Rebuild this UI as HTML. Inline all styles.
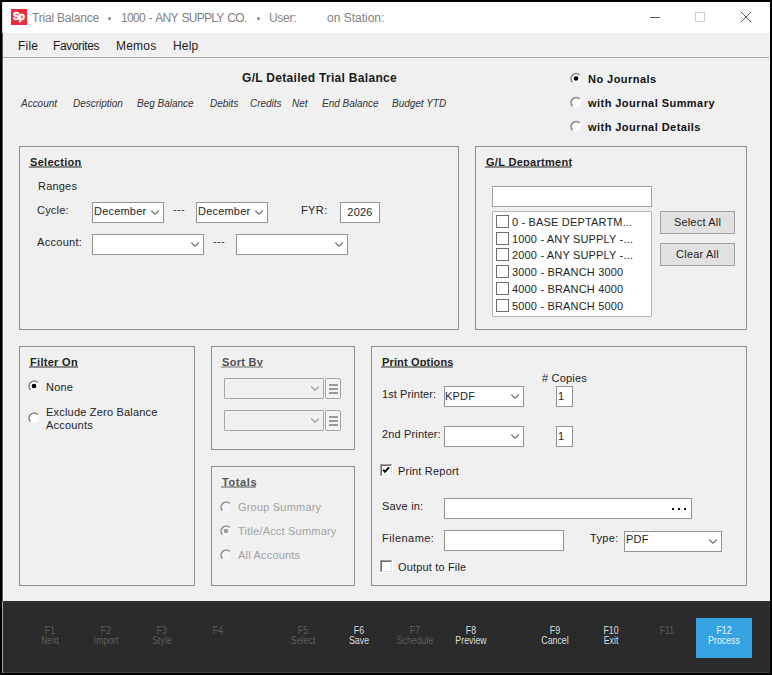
<!DOCTYPE html>
<html><head><meta charset="utf-8">
<style>
*{margin:0;padding:0;box-sizing:border-box}
html,body{width:772px;height:675px;overflow:hidden;background:#000}
body{position:relative;font-family:"Liberation Sans",sans-serif;font-size:11px;color:#000}
.a{position:absolute}
.t{position:absolute;white-space:nowrap;line-height:13px;font-size:11px;color:#1e1e1e;letter-spacing:0.2px}
.gb{position:absolute;border:1px solid #8f8f8f}
.hd{position:absolute;white-space:nowrap;line-height:13px;font-size:11px;font-weight:bold;letter-spacing:0.3px;color:#1e1e1e}
.ul{position:absolute;height:2px;background:#555}
.bx{position:absolute;background:#fff;border:1px solid #949494}
.ft{position:absolute;width:56px;text-align:center;font-size:10px;line-height:10px;color:#5e5e5e;transform:scaleX(0.88)}
svg{position:absolute;overflow:visible}
</style></head><body>
<div class="a" style="left:2px;top:2px;width:768px;height:671px;background:#f0f0f0"></div>
<div class="a" style="left:2px;top:2px;width:768px;height:31px;background:#fff"></div>
<div class="a" style="left:11px;top:9px;width:16px;height:16px;background:#ec2a3c"></div>
<div class="t" style="left:13px;top:9px;line-height:15px;color:#fff;font-weight:bold;font-size:10px;letter-spacing:-0.9px;-webkit-text-stroke:0.5px #fff">Sp</div>
<div class="t" style="left:32px;top:11px;font-size:12px;line-height:15px;color:#808080;letter-spacing:-0.2px">Trial Balance</div>
<div class="a" style="left:108px;top:17px;width:3px;height:3px;border-radius:50%;background:#888"></div>
<div class="t" style="left:121px;top:11px;font-size:12px;line-height:15px;color:#808080;letter-spacing:-0.7px;word-spacing:1.2px">1000 - ANY SUPPLY CO.</div>
<div class="a" style="left:257px;top:17px;width:3px;height:3px;border-radius:50%;background:#888"></div>
<div class="t" style="left:269px;top:11px;font-size:12px;line-height:15px;color:#808080;letter-spacing:-0.3px">User:</div>
<div class="t" style="left:327px;top:11px;font-size:12px;line-height:15px;color:#808080;letter-spacing:0px">on Station:</div>
<div class="a" style="left:650px;top:17px;width:10px;height:1px;background:#555"></div>
<div class="a" style="left:695px;top:12px;width:10px;height:10px;border:1px solid #ccc"></div>
<svg style="left:741px;top:12px" width="10" height="10"><path d="M0 0L10 10M10 0L0 10" stroke="#555" stroke-width="1"/></svg>
<div class="a" style="left:3px;top:33px;width:766px;height:24px;background:#f0f0f0"></div>
<div class="a" style="left:3px;top:57px;width:766px;height:1px;background:#a9a9a9"></div>
<div class="a" style="left:2px;top:33px;width:1px;height:568px;background:#5a5a5a"></div>
<div class="a" style="left:3px;top:58px;width:1px;height:543px;background:#fafafa"></div>
<div class="a" style="left:769px;top:33px;width:1px;height:568px;background:#fafafa"></div>
<div class="a" style="left:2px;top:2px;width:1px;height:31px;background:#d8d8d8"></div>
<div class="t" style="left:18px;top:39px;font-size:12px;line-height:15px;color:#1a1a1a;">File</div>
<div class="t" style="left:53px;top:39px;font-size:12px;line-height:15px;color:#1a1a1a;letter-spacing:-0.35px">Favorites</div>
<div class="t" style="left:116px;top:39px;font-size:12px;line-height:15px;color:#1a1a1a;">Memos</div>
<div class="t" style="left:173px;top:39px;font-size:12px;line-height:15px;color:#1a1a1a;">Help</div>
<div class="t" style="left:242px;top:71px;font-size:12px;line-height:15px;font-weight:bold;color:#1a1a1a;letter-spacing:0.3px">G/L Detailed Trial Balance</div>
<div class="t" style="left:21px;top:97px;font-size:10px;font-style:italic;color:#333;letter-spacing:-0.02px;">Account</div>
<div class="t" style="left:73px;top:97px;font-size:10px;font-style:italic;color:#333;letter-spacing:-0.02px;">Description</div>
<div class="t" style="left:137px;top:97px;font-size:10px;font-style:italic;color:#333;letter-spacing:-0.02px;">Beg Balance</div>
<div class="t" style="left:210px;top:97px;font-size:10px;font-style:italic;color:#333;letter-spacing:-0.02px;">Debits</div>
<div class="t" style="left:250px;top:97px;font-size:10px;font-style:italic;color:#333;letter-spacing:-0.02px;">Credits</div>
<div class="t" style="left:292px;top:97px;font-size:10px;font-style:italic;color:#333;letter-spacing:-0.02px;">Net</div>
<div class="t" style="left:322px;top:97px;font-size:10px;font-style:italic;color:#333;letter-spacing:-0.02px;">End Balance</div>
<div class="t" style="left:392px;top:97px;font-size:10px;font-style:italic;color:#333;letter-spacing:-0.02px;">Budget YTD</div>
<svg style="left:570px;top:72px;transform:translateY(0.5px)" width="12" height="12" viewBox="0 0 12 12"><circle cx="6" cy="6" r="4.9" fill="#fff"/><path d="M2.4 9.6A5.1 5.1 0 0 1 9.6 2.4" fill="none" stroke="#8a8a8a" stroke-width="1.7"/><circle cx="6" cy="6" r="2.35" fill="#000"/></svg>
<div class="t" style="left:588px;top:73px;font-weight:bold;letter-spacing:0.45px;color:#111">No Journals</div>
<svg style="left:570px;top:96px;transform:translateY(0.5px)" width="12" height="12" viewBox="0 0 12 12"><circle cx="6" cy="6" r="4.9" fill="#fff"/><path d="M2.4 9.6A5.1 5.1 0 0 1 9.6 2.4" fill="none" stroke="#8a8a8a" stroke-width="1.7"/></svg>
<div class="t" style="left:588px;top:97px;font-weight:bold;letter-spacing:0.45px;color:#111">with Journal Summary</div>
<svg style="left:570px;top:120px;transform:translateY(0.5px)" width="12" height="12" viewBox="0 0 12 12"><circle cx="6" cy="6" r="4.9" fill="#fff"/><path d="M2.4 9.6A5.1 5.1 0 0 1 9.6 2.4" fill="none" stroke="#8a8a8a" stroke-width="1.7"/></svg>
<div class="t" style="left:588px;top:121px;font-weight:bold;letter-spacing:0.45px;color:#111">with Journal Details</div>
<div class="gb" style="left:19px;top:146px;width:440px;height:184px"></div>
<div class="hd" style="left:30px;top:156px;">Selection</div>
<div class="ul" style="left:29px;top:166px;width:53px;background:#8c8c8c"></div>
<div class="t" style="left:38px;top:180px;">Ranges</div>
<div class="t" style="left:37px;top:204px;letter-spacing:0.2px">Cycle:</div>
<div class="bx" style="left:92px;top:202px;width:72px;height:21px;"></div>
<div class="t" style="left:94px;top:205px;">December</div>
<svg style="left:151px;top:210px" width="9" height="5"><path d="M0.3 0.6L4 4.3L7.7 0.6" fill="none" stroke="#5c5c5c" stroke-width="1.15"/></svg>
<div class="t" style="left:173px;top:203px;letter-spacing:0.35px;color:#333">---</div>
<div class="bx" style="left:196px;top:202px;width:72px;height:21px;"></div>
<div class="t" style="left:198px;top:205px;">December</div>
<svg style="left:255px;top:210px" width="9" height="5"><path d="M0.3 0.6L4 4.3L7.7 0.6" fill="none" stroke="#5c5c5c" stroke-width="1.15"/></svg>
<div class="t" style="left:301px;top:204px;letter-spacing:0.4px">FYR:</div>
<div class="bx" style="left:340px;top:202px;width:40px;height:21px;"></div>
<div class="t" style="left:340px;top:206px;width:40px;text-align:center">2026</div>
<div class="t" style="left:37px;top:236px;letter-spacing:0.3px">Account:</div>
<div class="bx" style="left:92px;top:234px;width:112px;height:21px;"></div>
<svg style="left:191px;top:242px" width="9" height="5"><path d="M0.3 0.6L4 4.3L7.7 0.6" fill="none" stroke="#5c5c5c" stroke-width="1.15"/></svg>
<div class="t" style="left:213px;top:235px;letter-spacing:0.35px;color:#333">---</div>
<div class="bx" style="left:236px;top:234px;width:112px;height:21px;"></div>
<svg style="left:335px;top:242px" width="9" height="5"><path d="M0.3 0.6L4 4.3L7.7 0.6" fill="none" stroke="#5c5c5c" stroke-width="1.15"/></svg>
<div class="gb" style="left:475px;top:146px;width:272px;height:184px"></div>
<div class="hd" style="left:486px;top:156px;">G/L Department</div>
<div class="ul" style="left:485px;top:166px;width:86px;background:#8c8c8c"></div>
<div class="bx" style="left:492px;top:186px;width:160px;height:21px;border-color:#a0a0a0"></div>
<div class="bx" style="left:492px;top:211px;width:160px;height:106px;border-color:#b4b4b4"></div>
<div class="a" style="left:496px;top:215px;width:13px;height:13px;border:1px solid #6e6e6e;background:#fff"></div>
<div class="t" style="left:512px;top:216px;letter-spacing:0.17px">0 - BASE DEPTARTM...</div>
<div class="a" style="left:496px;top:232px;width:13px;height:13px;border:1px solid #6e6e6e;background:#fff"></div>
<div class="t" style="left:512px;top:233px;letter-spacing:0.17px">1000 - ANY SUPPLY -...</div>
<div class="a" style="left:496px;top:248px;width:13px;height:13px;border:1px solid #6e6e6e;background:#fff"></div>
<div class="t" style="left:512px;top:249px;letter-spacing:0.17px">2000 - ANY SUPPLY -...</div>
<div class="a" style="left:496px;top:265px;width:13px;height:13px;border:1px solid #6e6e6e;background:#fff"></div>
<div class="t" style="left:512px;top:266px;letter-spacing:0.17px">3000 - BRANCH 3000</div>
<div class="a" style="left:496px;top:282px;width:13px;height:13px;border:1px solid #6e6e6e;background:#fff"></div>
<div class="t" style="left:512px;top:283px;letter-spacing:0.17px">4000 - BRANCH 4000</div>
<div class="a" style="left:496px;top:299px;width:13px;height:13px;border:1px solid #6e6e6e;background:#fff"></div>
<div class="t" style="left:512px;top:300px;letter-spacing:0.17px">5000 - BRANCH 5000</div>
<div class="a" style="left:660px;top:211px;width:75px;height:23px;background:#e1e1e1;border:1px solid #a2a2a2"></div>
<div class="t" style="left:660px;top:216px;width:75px;text-align:center">Select All</div>
<div class="a" style="left:660px;top:243px;width:75px;height:23px;background:#e1e1e1;border:1px solid #a2a2a2"></div>
<div class="t" style="left:660px;top:248px;width:75px;text-align:center">Clear All</div>
<div class="gb" style="left:19px;top:346px;width:176px;height:240px"></div>
<div class="hd" style="left:30px;top:356px;">Filter On</div>
<div class="ul" style="left:29px;top:366px;width:49px;background:#8c8c8c"></div>
<svg style="left:28px;top:380px;" width="12" height="12" viewBox="0 0 12 12"><circle cx="6" cy="6" r="4.9" fill="#fff"/><path d="M2.4 9.6A5.1 5.1 0 0 1 9.6 2.4" fill="none" stroke="#8a8a8a" stroke-width="1.7"/><circle cx="6" cy="6" r="2.35" fill="#000"/></svg>
<div class="t" style="left:46px;top:381px;">None</div>
<svg style="left:28px;top:412px;" width="12" height="12" viewBox="0 0 12 12"><circle cx="6" cy="6" r="4.9" fill="#fff"/><path d="M2.4 9.6A5.1 5.1 0 0 1 9.6 2.4" fill="none" stroke="#8a8a8a" stroke-width="1.7"/></svg>
<div class="t" style="left:46px;top:406px;">Exclude Zero Balance<br>Accounts</div>
<div class="gb" style="left:211px;top:346px;width:144px;height:104px"></div>
<div class="hd" style="left:222px;top:356px;color:#505050">Sort By</div>
<div class="ul" style="left:221px;top:366px;width:42px;background:#b0b0b0"></div>
<div class="a" style="left:224px;top:378px;width:100px;height:21px;border:1px solid #a6a6a6;background:#f0f0f0;border-radius:1px"></div>
<svg style="left:311px;top:386px" width="9" height="5"><path d="M0.3 0.6L4 4.3L7.7 0.6" fill="none" stroke="#8a8a8a" stroke-width="1.15"/></svg>
<div class="a" style="left:325px;top:378px;width:16px;height:21px;border:1px solid #a6a6a6;background:#f3f3f3;border-radius:2px"></div>
<div class="a" style="left:329px;top:384px;width:9px;height:2px;background:#999"></div>
<div class="a" style="left:329px;top:388px;width:9px;height:2px;background:#999"></div>
<div class="a" style="left:329px;top:392px;width:9px;height:2px;background:#999"></div>
<div class="a" style="left:224px;top:410px;width:100px;height:21px;border:1px solid #a6a6a6;background:#f0f0f0;border-radius:1px"></div>
<svg style="left:311px;top:418px" width="9" height="5"><path d="M0.3 0.6L4 4.3L7.7 0.6" fill="none" stroke="#8a8a8a" stroke-width="1.15"/></svg>
<div class="a" style="left:325px;top:410px;width:16px;height:21px;border:1px solid #a6a6a6;background:#f3f3f3;border-radius:2px"></div>
<div class="a" style="left:329px;top:416px;width:9px;height:2px;background:#999"></div>
<div class="a" style="left:329px;top:420px;width:9px;height:2px;background:#999"></div>
<div class="a" style="left:329px;top:424px;width:9px;height:2px;background:#999"></div>
<div class="gb" style="left:211px;top:466px;width:144px;height:120px"></div>
<div class="hd" style="left:222px;top:476px;color:#555;letter-spacing:0.6px">Totals</div>
<div class="ul" style="left:221px;top:486px;width:35px;background:#a0a0a0"></div>
<svg style="left:220px;top:501px;" width="12" height="12" viewBox="0 0 12 12"><circle cx="6" cy="6" r="4.9" fill="#f6f6f6"/><path d="M2.4 9.6A5.1 5.1 0 0 1 9.6 2.4" fill="none" stroke="#959595" stroke-width="1.7"/></svg>
<div class="t" style="left:238px;top:501px;color:#a2a2a2;">Group Summary</div>
<svg style="left:220px;top:525px;" width="12" height="12" viewBox="0 0 12 12"><circle cx="6" cy="6" r="4.9" fill="#f6f6f6"/><path d="M2.4 9.6A5.1 5.1 0 0 1 9.6 2.4" fill="none" stroke="#959595" stroke-width="1.7"/><circle cx="6" cy="6" r="2.35" fill="#9a9a9a"/></svg>
<div class="t" style="left:238px;top:525px;color:#a2a2a2;">Title/Acct Summary</div>
<svg style="left:220px;top:549px;" width="12" height="12" viewBox="0 0 12 12"><circle cx="6" cy="6" r="4.9" fill="#f6f6f6"/><path d="M2.4 9.6A5.1 5.1 0 0 1 9.6 2.4" fill="none" stroke="#959595" stroke-width="1.7"/></svg>
<div class="t" style="left:238px;top:549px;color:#a2a2a2;">All Accounts</div>
<div class="gb" style="left:371px;top:346px;width:376px;height:240px"></div>
<div class="hd" style="left:382px;top:356px;letter-spacing:0.15px">Print Options</div>
<div class="ul" style="left:381px;top:366px;width:72px;background:#8c8c8c"></div>
<div class="t" style="left:542px;top:372px;"># Copies</div>
<div class="t" style="left:382px;top:388px;letter-spacing:0.08px">1st Printer:</div>
<div class="bx" style="left:444px;top:386px;width:80px;height:21px;"></div>
<div class="t" style="left:445px;top:390px;">KPDF</div>
<svg style="left:511px;top:394px" width="9" height="5"><path d="M0.3 0.6L4 4.3L7.7 0.6" fill="none" stroke="#5c5c5c" stroke-width="1.15"/></svg>
<div class="bx" style="left:556px;top:386px;width:17px;height:21px;"></div>
<div class="t" style="left:558px;top:390px;">1</div>
<div class="t" style="left:382px;top:428px;letter-spacing:0.15px">2nd Printer:</div>
<div class="bx" style="left:444px;top:426px;width:80px;height:21px;"></div>
<svg style="left:511px;top:434px" width="9" height="5"><path d="M0.3 0.6L4 4.3L7.7 0.6" fill="none" stroke="#5c5c5c" stroke-width="1.15"/></svg>
<div class="bx" style="left:556px;top:426px;width:17px;height:21px;"></div>
<div class="t" style="left:558px;top:430px;">1</div>
<svg style="left:380px;top:464px" width="13" height="13" viewBox="0 0 13 13"><rect x="0" y="0" width="13" height="13" fill="#fff"/><rect x="0" y="0" width="12" height="1" fill="#a0a0a0"/><rect x="0" y="0" width="1" height="12" fill="#a0a0a0"/><rect x="1" y="1" width="10" height="1" fill="#696969"/><rect x="1" y="1" width="1" height="10" fill="#696969"/><rect x="1" y="11" width="11" height="1" fill="#e3e3e3"/><rect x="11" y="1" width="1" height="11" fill="#e3e3e3"/><path d="M3.2 5.6L5 7.8L9 3.4" fill="none" stroke="#000" stroke-width="2"/></svg>
<div class="t" style="left:398px;top:465px;">Print Report</div>
<div class="t" style="left:382px;top:500px;">Save in:</div>
<div class="bx" style="left:444px;top:498px;width:248px;height:21px;"></div>
<div class="a" style="left:672px;top:508px;width:2px;height:2px;background:#111"></div>
<div class="a" style="left:678px;top:508px;width:2px;height:2px;background:#111"></div>
<div class="a" style="left:684px;top:508px;width:2px;height:2px;background:#111"></div>
<div class="t" style="left:382px;top:532px;letter-spacing:0.45px">Filename:</div>
<div class="bx" style="left:444px;top:530px;width:120px;height:21px;"></div>
<div class="t" style="left:590px;top:532px;letter-spacing:0.35px">Type:</div>
<div class="bx" style="left:624px;top:531px;width:98px;height:21px;"></div>
<div class="t" style="left:626px;top:533px;">PDF</div>
<svg style="left:709px;top:539px" width="9" height="5"><path d="M0.3 0.6L4 4.3L7.7 0.6" fill="none" stroke="#5c5c5c" stroke-width="1.15"/></svg>
<svg style="left:380px;top:560px" width="13" height="13" viewBox="0 0 13 13"><rect x="0" y="0" width="13" height="13" fill="#fff"/><rect x="0" y="0" width="12" height="1" fill="#a0a0a0"/><rect x="0" y="0" width="1" height="12" fill="#a0a0a0"/><rect x="1" y="1" width="10" height="1" fill="#696969"/><rect x="1" y="1" width="1" height="10" fill="#696969"/><rect x="1" y="11" width="11" height="1" fill="#e3e3e3"/><rect x="11" y="1" width="1" height="11" fill="#e3e3e3"/></svg>
<div class="t" style="left:398px;top:561px;letter-spacing:0.16px">Output to File</div>
<div class="a" style="left:2px;top:601px;width:768px;height:72px;background:#2b2b2b"></div>
<div class="a" style="left:2px;top:601px;width:1px;height:72px;background:#a8a8a8"></div>
<div class="a" style="left:3px;top:672px;width:767px;height:1px;background:#434343"></div>
<div class="a" style="left:769px;top:601px;width:1px;height:72px;background:#333"></div>
<div class="ft" style="left:22px;top:626px;color:#5e5e5e">F1<br>Next</div>
<div class="ft" style="left:78px;top:626px;color:#5e5e5e">F2<br>Import</div>
<div class="ft" style="left:134px;top:626px;color:#5e5e5e">F3<br>Style</div>
<div class="ft" style="left:190px;top:626px;color:#5e5e5e">F4<br></div>
<div class="ft" style="left:275px;top:626px;color:#5e5e5e">F5<br>Select</div>
<div class="ft" style="left:331px;top:626px;color:#dedede">F6<br>Save</div>
<div class="ft" style="left:387px;top:626px;color:#5e5e5e">F7<br>Schedule</div>
<div class="ft" style="left:443px;top:626px;color:#dedede">F8<br>Preview</div>
<div class="ft" style="left:527px;top:626px;color:#dedede">F9<br>Cancel</div>
<div class="ft" style="left:583px;top:626px;color:#dedede">F10<br>Exit</div>
<div class="ft" style="left:639px;top:626px;color:#5e5e5e">F11<br></div>
<div class="a" style="left:696px;top:618px;width:56px;height:40px;background:#36a3e3"></div>
<div class="ft" style="left:696px;top:626px;color:#eaf6fd">F12<br>Process</div>
</body></html>
